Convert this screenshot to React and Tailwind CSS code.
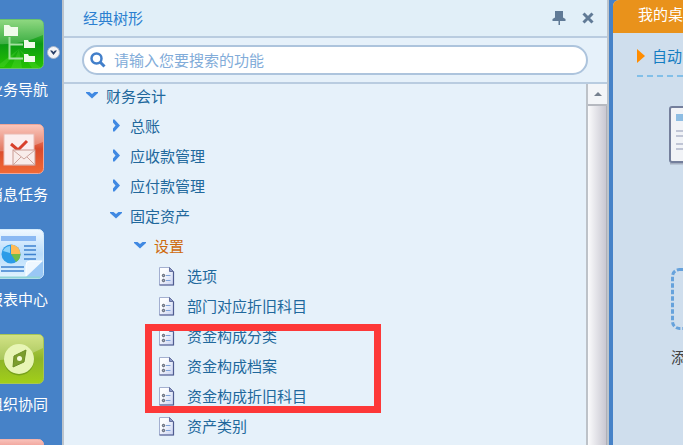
const NAV = [
  { label: "业务导航", icon: GuideIcon, menu: true },
  { label: "消息任务", icon: MailIcon },
  { label: "报表中心", icon: ReportIcon },
  { label: "组织协同", icon: CompassIcon },
  { label: "", icon: RedIcon },
];

const TREE = [
  { label: "财务会计", level: 0, open: true },
  { label: "总账", level: 1 },
  { label: "应收款管理", level: 1 },
  { label: "应付款管理", level: 1 },
  { label: "固定资产", level: 1, open: true },
  { label: "设置", level: 2, open: true, active: true },
  { label: "选项", level: 3 },
  { label: "部门对应折旧科目", level: 3 },
  { label: "资金构成分类", level: 3 },
  { label: "资金构成档案", level: 3 },
  { label: "资金构成折旧科目", level: 3 },
  { label: "资产类别", level: 3 },
];

const INDENT = ["pl-[21px]", "pl-[45px]", "pl-[69px]", "pl-[95px]"];

function Tile({ id, from, mid, to, edge, children }) {
  return (
    <svg width="50" height="50" viewBox="0 0 50 50" className="block shrink-0" aria-hidden="true">
      <defs>
        <linearGradient id={id} x1="0" y1="0" x2="0" y2="1">
          <stop offset="0" stopColor={from} />
          <stop offset=".5" stopColor={mid} />
          <stop offset="1" stopColor={to} />
        </linearGradient>
      </defs>
      <rect x=".5" y=".5" width="49" height="49" rx="5" fill={`url(#${id})`} stroke={edge} />
      {children}
    </svg>
  );
}

function GuideIcon() {
  return (
    <Tile id="guide" from="#74cf62" mid="#0b9a14" to="#25c400" edge="#69c36c">
      <path d="M1 5Q1 1 5 1H45Q49 1 49 5V16Q25 27 1 25Z" fill="#fff" opacity=".2" />
      <path d="M25 30L2 48H10L25 30L17 49H28L25 30L38 49H47Z" fill="#7cf05a" opacity=".2" />
      <path d="M15.500 18V39.500H29M15.500 25.500H29" fill="none" stroke="#a3dfa0" strokeWidth="2" />
      <path d="M10 6H15L17 8H24V17H10Z M30 21H34L35 23H41V29H30Z M30 35H34L35 37H41V43H30Z" fill="#effbea" />
    </Tile>
  );
}

function MailIcon() {
  return (
    <Tile id="mail" from="#f9b3a5" mid="#d94a2c" to="#f26a35" edge="#f0a596">
      <path d="M1 5Q1 1 5 1H45Q49 1 49 5V18Q25 29 1 27Z" fill="#fff" opacity=".28" />
      <rect x="10" y="10" width="30" height="31" fill="#fbeeee" stroke="#e9b9b2" />
      <path d="M17 20L24 26L33 17" fill="none" stroke="#d8402b" strokeWidth="3" />
      <rect x="19" y="26" width="22" height="15" fill="#f8ecea" stroke="#c99a92" />
      <path d="M19 26L30 35L41 26M19 41L27 33M41 41L33 33" fill="none" stroke="#cda49d" />
    </Tile>
  );
}

function ReportIcon() {
  return (
    <Tile id="report" from="#f0f8ff" mid="#b8dcfb" to="#e2f4ff" edge="#d4ebfb">
      <rect x="7" y="7" width="35" height="5" fill="#8bb9f3" />
      <path d="M30 17H42M30 21H42M30 25.500H42M30 30H42M7 38H30M7 42H30" stroke="#3f83cf" strokeWidth="1.500" />
      <circle cx="17" cy="25" r="9.500" fill="#2b9ce8" />
      <path d="M17 25V15.500A9.500 9.500 0 0 1 26.500 25Z" fill="#ffbb55" />
      <path d="M17 25H26.500A9.500 9.500 0 0 1 22 33Z" fill="#71bd4c" />
      <path d="M9 22A8 8 0 0 1 16 17V24Z" fill="#8bd2fa" />
      <path d="M32 48V36Q32 32 36 32H49Z" fill="#eef7ff" />
      <path d="M32 48L49 32V45Q49 49 45 49H32Z" fill="#99c7f5" />
      <path d="M32 47V36Q32 32 36 32H48" fill="none" stroke="#fff" />
      <path d="M1 48.500H46" stroke="#8fd4d6" strokeWidth="2" />
    </Tile>
  );
}

function CompassIcon() {
  return (
    <Tile id="compass" from="#c4d95d" mid="#8eb529" to="#a2cf18" edge="#a8c653">
      <path d="M1 5Q1 1 5 1H45Q49 1 49 5V14Q25 27 1 26Z" fill="#fff" opacity=".25" />
      <circle cx="25" cy="26.500" r="15" fill="#557f18" opacity=".5" />
      <circle cx="25" cy="25" r="15" fill="#e8f5b5" />
      <path d="M32 16L30 28L19 33L20 22Z" fill="#7c9d2d" stroke="#6b8d25" />
      <circle cx="25.500" cy="24.500" r="2.500" fill="#f4fbd9" />
    </Tile>
  );
}

function RedIcon() {
  return <Tile id="red" from="#f8c2bb" mid="#df5347" to="#ec6a4b" edge="#f5b3aa" />;
}

function DocIcon() {
  return (
    <svg width="16" height="19" viewBox="0 0 16 19" aria-hidden="true">
      <defs>
        <linearGradient id="doc" x1="0" y1="0" x2="1" y2="1">
          <stop offset=".3" stopColor="#fcfdff" />
          <stop offset="1" stopColor="#c8d1f0" />
        </linearGradient>
      </defs>
      <path d="M.5.5H10.500L14.500 4.500V18H.5Z" fill="url(#doc)" stroke="#a3afd0" />
      <path d="M14.500 4.500V18H.5" fill="none" stroke="#4f5b90" strokeWidth="1.200" />
      <path d="M10.500 .5V4.500H14.500Z" fill="#8c99c8" stroke="#65719f" />
      <circle cx="4.500" cy="8.500" r="1.200" fill="#a8b0be" stroke="#4d5361" />
      <circle cx="4.500" cy="13.500" r="1.200" fill="#a8b0be" stroke="#4d5361" />
      <path d="M7 8.500H11.500M7 13.500H11.500" stroke="#7fa3da" />
    </svg>
  );
}

function Chevron({ open }) {
  return (
    <svg width="14" height="14" viewBox="0 0 14 14" aria-hidden="true">
      <path
        d={open ? "M1 3H4.500L7 5L9.500 3H13V4L7 9.500L1 4Z" : "M4 .5H5.500L11 6.500L5.500 12.500H4V9.500L6.500 6.500L4 3.500Z"}
        fill="#4089e2"
      />
    </svg>
  );
}

function Sidebar() {
  return (
    <nav className="flex w-[62px] shrink-0 flex-col gap-[5px] overflow-hidden bg-[#4682c8] pt-[19px]">
      {NAV.map(({ label, icon: Icon, menu }, i) => (
        <div key={i} className="flex h-[100px] shrink-0 items-start">
          <button
            type="button"
            aria-label={label || "更多"}
            className="flex w-12 shrink-0 flex-col items-end gap-2 overflow-hidden text-[15px] leading-6 text-white"
          >
            <span className="flex w-11 justify-end self-start">
              <Icon />
            </span>
            <span className="whitespace-nowrap">{label}</span>
          </button>
          {menu && (
            <button type="button" aria-label="展开" className="mt-[27px] -ml-px shrink-0">
              <svg width="13" height="13" viewBox="0 0 13 13">
                <circle cx="6.500" cy="6.500" r="6" fill="#f3f4f7" stroke="#a8b6cb" />
                <path d="M3 4.500H5L6.500 6L8 4.500H10L6.500 9Z" fill="#283e66" />
              </svg>
            </button>
          )}
        </div>
      ))}
    </nav>
  );
}

function TreeRow({ label, level, open, active }) {
  return (
    <li role="treeitem" aria-level={level + 1} aria-expanded={level < 3 ? Boolean(open) : undefined}>
      <button
        type="button"
        className={`flex h-6 w-full items-center text-[15px] whitespace-nowrap ${INDENT[level]} ${
          active ? "text-[#cf6a0c]" : "text-[#21689c]"
        }`}
      >
        {level < 3 ? (
          <span className="w-[21px]">
            <Chevron open={open} />
          </span>
        ) : (
          <span className="w-7">
            <DocIcon />
          </span>
        )}
        {label}
      </button>
    </li>
  );
}

function MenuPanel() {
  return (
    <section className="flex min-w-0 flex-1 flex-col border-x-2 border-[#bcc4cc] bg-[#e6f1fa]">
      <header className="flex h-[38px] shrink-0 items-center justify-between border-b-2 border-[#b9cce0] bg-[#e1eff8] pr-[13px] pl-[19px]">
        <h2 className="text-[15px] text-[#2c7fd0]">经典树形</h2>
        <div className="flex items-center gap-4">
          <button type="button" aria-label="固定">
            <svg width="14" height="14" viewBox="0 0 14 14" fill="#607a96">
              <path d="M3 0H11V6.500L13.500 8V10H8V14H6.500V10H.5V8L3 6.500Z" />
            </svg>
          </button>
          <button type="button" aria-label="关闭">
            <svg width="12" height="12" viewBox="0 0 12 12">
              <path d="M1.500 1.500L10.500 10.500M10.500 1.500L1.500 10.500" stroke="#607a96" strokeWidth="3" />
            </svg>
          </button>
        </div>
      </header>
      <div className="shrink-0 border-b-2 border-[#b9cce0] pt-[7px] pr-[19px] pb-[7px] pl-[18px]">
        <label className="flex h-[30px] items-center gap-2 rounded-full border-2 border-[#adc4dd] bg-white px-[6px]">
          <svg width="16" height="16" viewBox="0 0 16 16" className="shrink-0" aria-hidden="true">
            <circle cx="6.500" cy="6.500" r="5" fill="none" stroke="#427fca" strokeWidth="2.500" />
            <path d="M10 10L14.500 14.500" stroke="#427fca" strokeWidth="3" />
          </svg>
          <span className="sr-only">搜索功能</span>
          <input
            type="text"
            placeholder="请输入您要搜索的功能"
            className="min-w-0 flex-1 bg-transparent text-[15px] text-[#21689c] outline-none placeholder:text-[#82acd9]"
          />
        </label>
      </div>
      <div className="flex min-h-0 flex-1">
        <div className="relative min-w-0 flex-1 overflow-hidden">
          <ul role="tree" className="flex flex-col gap-[6px]">
            {TREE.map((row) => (
              <TreeRow key={row.label} {...row} />
            ))}
          </ul>
          <div className="pointer-events-none absolute top-60 left-[81px] h-[89px] w-[236px] border-[7px] border-[#fd3838]" />
        </div>
        <div className="flex w-[21px] shrink-0 flex-col border-l-2 border-[#bdc2c8]">
          <button
            type="button"
            aria-label="向上滚动"
            className="flex h-[22px] shrink-0 items-center justify-center border-b-2 border-[#b6b9c0] bg-[#f3f5f8]"
          >
            <svg width="8" height="4" viewBox="0 0 8 4">
              <path d="M0 4L4 0L8 4Z" fill="#76808e" />
            </svg>
          </button>
          <div className="flex-1 border-r border-[#b0b0b8] bg-linear-to-r from-[#fbfbfc] to-[#c9c8d2]" />
        </div>
      </div>
    </section>
  );
}

function Desktop() {
  return (
    <main className="w-[74px] shrink-0 overflow-hidden bg-[#4682c8] pl-1 whitespace-nowrap">
      <div className="h-full overflow-hidden rounded-tl-md bg-[#cfdeed]">
        <h1 className="flex h-[33px] items-center bg-[#e9921b] pb-1 pl-[25px] text-[15px] text-white">我的桌面</h1>
        <div className="ml-6 flex h-11 items-center gap-[7px] border-b-2 border-dashed border-[#82bfe8] pt-1 text-[15px] text-[#147dc2]">
          <svg width="8" height="14" viewBox="0 0 8 14" className="shrink-0" aria-hidden="true">
            <path d="M0 0L8 7L0 14Z" fill="#ff8c00" />
          </svg>
          自动
        </div>
        <div className="mt-7 ml-14 flex w-[62px] flex-col items-center">
          <svg width="62" height="60" viewBox="0 0 62 60" aria-hidden="true">
            <path d="M1 58.500H62" stroke="#a4aec0" strokeWidth="2" />
            <rect x="1" y="2" width="56" height="55" rx="2" fill="#f1f3f7" stroke="#747f9c" strokeWidth="2" />
            <path d="M7 9H20V16H7Z" fill="#8ebde3" />
            <path d="M7 26H48M7 31H48M7 39H48M7 44H48" stroke="#c0c5d5" strokeWidth="2" />
          </svg>
          <span className="mt-4 self-end text-[15px] leading-6 text-[#147dc2]">差旅费</span>
        </div>
        <div className="mt-[63px] ml-[58px] flex w-[62px] flex-col gap-4">
          <svg width="62" height="62" viewBox="0 0 62 62" aria-hidden="true">
            <rect
              x="1.500"
              y="1.500"
              width="59"
              height="59"
              rx="7"
              fill="none"
              stroke="#66a2dc"
              strokeWidth="3"
              strokeDasharray="4.500 2"
            />
          </svg>
          <span className="text-[15px] text-[#444]">添加</span>
        </div>
      </div>
    </main>
  );
}

export default function App() {
  return (
    <div className="flex h-screen w-full overflow-hidden font-['Noto_Sans_CJK_SC',sans-serif]">
      <Sidebar />
      <MenuPanel />
      <Desktop />
    </div>
  );
}
